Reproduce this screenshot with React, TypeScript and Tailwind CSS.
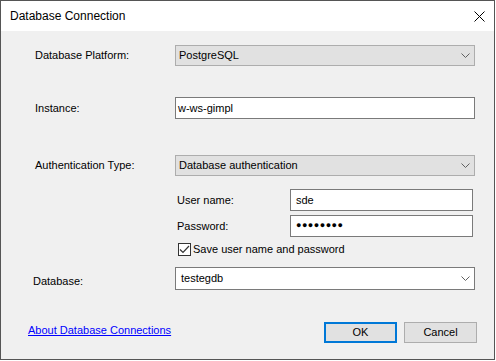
import React from "react"

const font = { fontFamily: '"Liberation Sans", Arial, sans-serif' }

function Chevron() {
  return (
    <svg width="9" height="5" viewBox="0 0 9 5" className="shrink-0">
      <path d="M0.5 0.5 L4.5 4.5 L8.5 0.5" fill="none" stroke="#606060" strokeWidth="1" />
    </svg>
  )
}

function Combo({ value, white }: { value: string; white?: boolean }) {
  return (
    <div
      className={
        white
          ? "flex h-[23px] w-[300px] items-center justify-between border border-[#7a7a7a] bg-white pl-[5px] pr-[4px]"
          : "flex h-[21px] w-[300px] items-center justify-between border border-[#adadad] bg-[#e1e1e1] pl-[3px] pr-[4px]"
      }
    >
      <span>{value}</span>
      <Chevron />
    </div>
  )
}

export default function App() {
  return (
    <div className="h-[361px] w-[496px] bg-white text-[11px] text-black" style={font}>
      <div className="flex h-[360px] w-[495px] flex-col border border-[#555555] bg-[#f0f0f0]">
        {/* Title bar */}
        <div className="flex h-[30px] items-center justify-between bg-white pl-[9px] pr-[9px]">
          <span className="text-[12px]">Database Connection</span>
          <svg width="11" height="11" viewBox="0 0 11 11">
            <path d="M0.5 0.5 L10.5 10.5 M10.5 0.5 L0.5 10.5" stroke="#000" strokeWidth="1" />
          </svg>
        </div>

        {/* Form */}
        <div className="flex flex-col pl-[34px] pr-[19px]">
          <div className="mt-[14px] grid grid-cols-[140px_300px] items-center">
            <span>Database Platform:</span>
            <Combo value="PostgreSQL" />
          </div>

          <div className="mt-[31px] grid grid-cols-[140px_300px] items-center">
            <span>Instance:</span>
            <div className="flex h-[22px] items-center border border-[#7a7a7a] bg-white px-[2px]">w-ws-gimpl</div>
          </div>

          <div className="mt-[36px] grid grid-cols-[140px_300px] items-center">
            <span>Authentication Type:</span>
            <Combo value="Database authentication" />
          </div>

          <div className="ml-[142px] mt-[13px] grid grid-cols-[113px_183px] items-center">
            <span>User name:</span>
            <div className="h-[22px] border border-[#7a7a7a] bg-white px-[5px] pt-[2px]">sde</div>
          </div>

          <div className="ml-[142px] mt-[4px] grid grid-cols-[113px_183px] items-center">
            <span>Password:</span>
            <div className="flex h-[22px] items-center border border-[#7a7a7a] bg-white px-[5px] text-[9px] font-bold tracking-[0.5px]">
              ●●●●●●●●
            </div>
          </div>

          <label className="ml-[143px] mt-[6px] flex h-[13px] items-center gap-[2px]">
            <span className="flex h-[13px] w-[13px] items-center justify-center border border-[#333333] bg-white">
              <svg width="11" height="9" viewBox="0 0 11 9">
                <path d="M1 4.5 L4 7.5 L10 1" fill="none" stroke="#333333" strokeWidth="1.2" />
              </svg>
            </span>
            <span>Save user name and password</span>
          </label>

          <div className="mt-[11px] grid grid-cols-[140px_300px] items-center">
            <span className="-ml-[2px] pt-[5px]">Database:</span>
            <Combo value="testegdb" white />
          </div>
        </div>

        {/* Footer */}
        <div className="mt-[32px] flex items-center pl-[27px] pr-[17px]">
          <a className="-mt-[5px] text-[#0000ff] underline">About Database Connections</a>
          <button className="ml-auto h-[21px] w-[73px] border-2 border-[#0078d7] bg-[#e1e1e1]">OK</button>
          <button className="ml-[7px] h-[21px] w-[73px] border border-[#adadad] bg-[#e1e1e1]">Cancel</button>
        </div>
      </div>
    </div>
  )
}
